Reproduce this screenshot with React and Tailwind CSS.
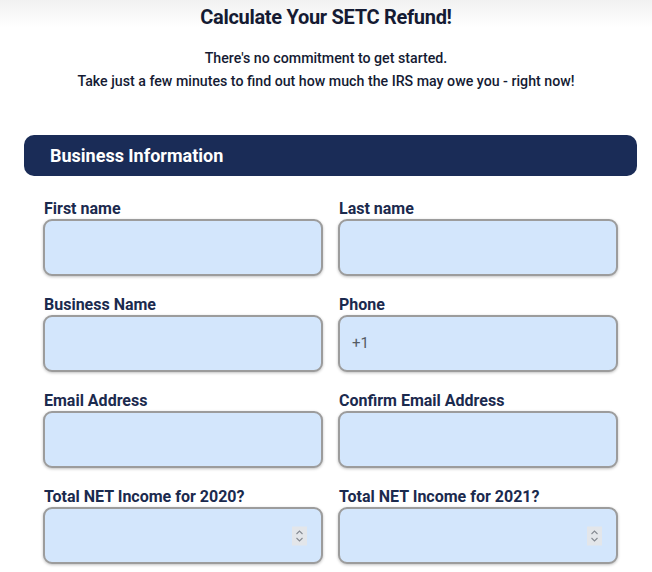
import React from "react";

function Spinner() {
  return (
    <div className="absolute right-[14px] top-1/2 -translate-y-1/2 w-[15px] h-[19px] bg-[#e3e6ea] flex items-center justify-center">
      <svg width="9" height="13" viewBox="0 0 9 13" fill="none" stroke="#858a92" strokeWidth="1.1">
        <path d="M1.5 4.5 L4.5 1.5 L7.5 4.5" />
        <path d="M1.5 8.5 L4.5 11.5 L7.5 8.5" />
      </svg>
    </div>
  );
}

function Field({ label, value, spinner }) {
  return (
    <div className="flex flex-col">
      <label className="text-[16px] leading-[21px] font-bold text-[#1b2a4e] pl-[1px] pt-[1px]">{label}</label>
      <div className="relative h-[57px] rounded-[9px] border-2 border-[#9c9c9c] bg-[#d3e6fc] shadow-[0_1px_3px_rgba(0,0,0,0.25)] flex items-center">
        {value && <span className="pl-[12px] text-[15px] text-[#555b63]">{value}</span>}
        {spinner && <Spinner />}
      </div>
    </div>
  );
}

export default function App() {
  return (
    <div
      className="w-[652px] h-[572px] overflow-hidden bg-[linear-gradient(to_bottom,#f1f1f1,#ffffff_28px)] text-[#1a1f36]"
      style={{ fontFamily: "Roboto, 'Liberation Sans', sans-serif" }}
    >
      <h1 className="text-center text-[20px] leading-[28px] font-bold pt-[3px] tracking-[-0.3px] text-[#151b33]">
        Calculate Your SETC Refund!
      </h1>
      <div className="mt-[16px] text-center text-[14.2px] leading-[23px] font-medium text-[#151b33]">
        <p>There's no commitment to get started.</p>
        <p>Take just a few minutes to find out how much the IRS may owe you - right now!</p>
      </div>
      <div className="ml-[24px] w-[613px] mt-[42px]">
        <div className="h-[41px] rounded-[10px] bg-[#1a2c57] flex items-center pl-[26px]">
          <span className="text-white font-bold text-[18px]">Business Information</span>
        </div>
        <div className="px-[19px] pt-[21px] grid grid-cols-2 gap-x-[15px] gap-y-[17px]">
          <Field label="First name" />
          <Field label="Last name" />
          <Field label="Business Name" />
          <Field label="Phone" value="+1" />
          <Field label="Email Address" />
          <Field label="Confirm Email Address" />
          <Field label="Total NET Income for 2020?" spinner />
          <Field label="Total NET Income for 2021?" spinner />
        </div>
      </div>
    </div>
  );
}
